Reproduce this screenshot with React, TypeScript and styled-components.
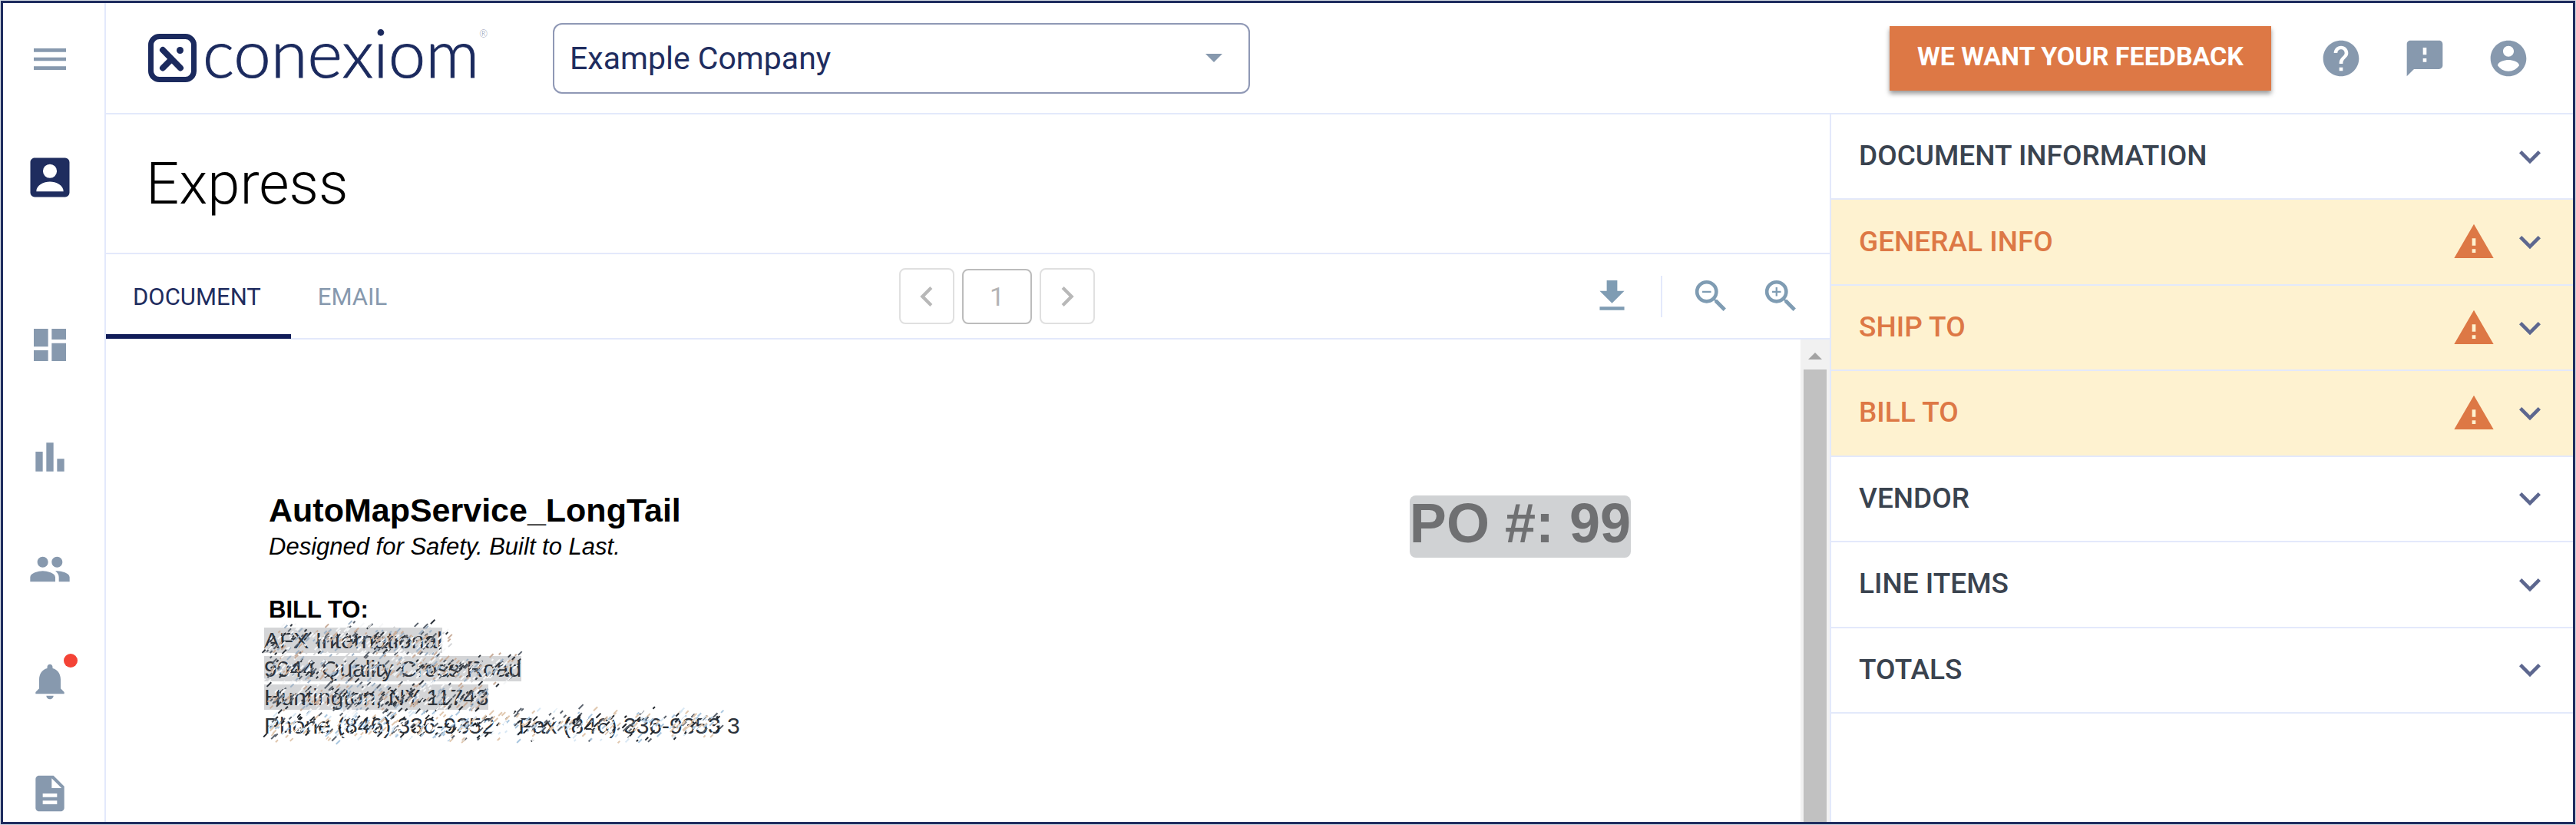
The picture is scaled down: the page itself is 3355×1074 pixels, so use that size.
import React, { useState } from "react";
import styled, { createGlobalStyle } from "styled-components";
import {
  MdBarChart,
  MdChevronLeft,
  MdChevronRight,
  MdDashboard,
  MdDescription,
  MdExpandMore,
  MdFeedback,
  MdGetApp,
  MdHelp,
  MdMenu,
  MdNotifications,
  MdPeople,
  MdWarning,
  MdZoomIn,
  MdZoomOut,
} from "react-icons/md";

const navy = "#1f2d5f";
const slate = "#8799ae";
const steel = "#7f9cb3";
const line = "#e3e9fb";
const orange = "#dd7845";

const GlobalStyle = createGlobalStyle`
  *, *::before, *::after { box-sizing: border-box; }
  body { margin: 0; background: #d3dae2; }
  button, input, select { font: inherit; color: inherit; }
  button { border: 0; background: none; padding: 0; cursor: pointer; }
  svg { display: block; flex: none; }
`;

const Frame = styled.div`
  display: flex;
  height: 100vh;
  border: 1px solid #d3dae2;
  font-family: Roboto, "Liberation Sans", sans-serif;
  background: #fff;
`;

const Shell = styled.div`
  flex: 1;
  min-width: 0;
  display: flex;
  border: 3px solid ${navy};
  overflow: hidden;
`;

const Sidebar = styled.nav`
  flex: none;
  width: 134px;
  padding-right: 10px;
  border-right: 2px solid ${line};
  display: flex;
  flex-direction: column;
  overflow: hidden;
`;

const NavButton = styled.button<{ $active?: boolean }>`
  flex: none;
  height: 146px;
  display: grid;
  place-items: center;
  color: ${(p) => (p.$active ? navy : slate)};
  font-size: ${(p) => (p.$active ? 68 : 56)}px;
  margin: ${(p) => (p.$active ? "8px 0 72px" : "0")};
`;

const BadgeHolder = styled.span`
  position: relative;
`;

const Badge = styled.span`
  position: absolute;
  top: -8px;
  right: -8px;
  width: 18px;
  height: 18px;
  border-radius: 50%;
  background: #f44336;
`;

const Main = styled.div`
  flex: 1;
  min-width: 0;
  display: flex;
  flex-direction: column;
`;

const Header = styled.header`
  flex: none;
  height: 145px;
  padding: 0 56px 0 55px;
  border-bottom: 2px solid ${line};
  display: flex;
  align-items: center;
`;

const Logo = styled.a`
  display: flex;
  align-items: center;
  gap: 8px;
  width: 447px;
  color: #1b2a5e;
  text-decoration: none;
`;

const Wordmark = styled.span`
  display: flex;
  font-family: Lato, "Liberation Sans", sans-serif;
  font-size: 87px;
  font-weight: 300;
  line-height: 96px;
  height: 112px;
  -webkit-text-stroke: 1px currentColor;
`;

const Registered = styled.sup`
  font-size: 13px;
  line-height: 48px;
  color: #8d95b0;
  -webkit-text-stroke: 0;
`;

const CompanyField = styled.label`
  display: grid;
  align-items: center;
  width: 908px;
  margin-left: 80px;
  color: ${navy};
  & > * {
    grid-area: 1 / 1;
  }
`;

const CompanySelect = styled.select`
  appearance: none;
  width: 100%;
  height: 92px;
  padding: 0 80px 0 20px;
  border: 2px solid #8f98b5;
  border-radius: 12px;
  background: #fff;
  font-size: 41px;
`;

const SelectArrow = styled.svg`
  justify-self: end;
  margin-right: 36px;
  pointer-events: none;
`;

const HeaderActions = styled.div`
  margin-left: auto;
  display: flex;
  align-items: center;
  gap: 53px;
  color: ${slate};
  font-size: 56px;
`;

const FeedbackButton = styled.button`
  height: 84px;
  padding: 0 36px 6px;
  margin-right: 10px;
  background: ${orange};
  color: #fff;
  font-size: 34px;
  font-weight: 700;
  box-shadow: 0 4px 6px rgba(0, 0, 0, 0.4);
`;

const Body = styled.div`
  flex: 1;
  min-height: 0;
  display: flex;
`;

const Workspace = styled.main`
  flex: 1;
  min-width: 0;
  display: flex;
  flex-direction: column;
`;

const Title = styled.h1`
  flex: none;
  margin: 0;
  height: 182px;
  padding: 0 52px;
  border-bottom: 2px solid ${line};
  font-size: 76px;
  font-weight: 300;
  line-height: 180px;
  color: #000;
`;

const Toolbar = styled.div`
  flex: none;
  height: 111px;
  border-bottom: 2px solid ${line};
  display: flex;
  justify-content: space-between;
`;

const Tabs = styled.div`
  display: flex;
  margin-bottom: -1px;
`;

const Tab = styled.button<{ $active?: boolean }>`
  padding: 6px 39px 0 35px;
  border-bottom: 6px solid ${(p) => (p.$active ? "#101c59" : "transparent")};
  color: ${(p) => (p.$active ? navy : slate)};
  font-size: 31px;
`;

const Pager = styled.div`
  display: flex;
  align-items: center;
  gap: 10px;
`;

const PageButton = styled.button`
  width: 72px;
  height: 73px;
  display: grid;
  place-items: center;
  border: 2px solid #e0e0e0;
  border-radius: 8px;
  color: #b8b8b8;
  font-size: 52px;
`;

const PageInput = styled.input`
  width: 91px;
  height: 72px;
  padding: 0;
  border: 2px solid #bcbcbc;
  border-radius: 8px;
  background: #fff;
  color: #b4b4b4;
  font-size: 34px;
  text-align: center;
`;

const Tools = styled.div`
  display: flex;
  align-items: center;
  padding-right: 18px;
  color: ${steel};
  font-size: 55px;
`;

const ToolButton = styled.button`
  padding: 18px;
`;

const Divider = styled.span`
  width: 2px;
  height: 54px;
  margin: 0 18px;
  background: ${line};
`;

const Viewer = styled.div`
  flex: 1;
  min-height: 0;
  display: flex;
`;

const Page = styled.article`
  flex: 1;
  min-width: 0;
  padding: 203px 221px 0 212px;
  display: flex;
  justify-content: space-between;
  align-items: flex-start;
  font-family: "Liberation Sans", Arial, sans-serif;
  font-size: 31px;
  line-height: 37px;
  color: #000;
`;

const Sender = styled.h2`
  margin: 0;
  padding-bottom: 10px;
  font-size: 43px;
  line-height: 38px;
`;

const Tagline = styled.p`
  margin: 0 0 45px;
  font-style: italic;
`;

const BillTo = styled.h3`
  margin: 0;
  font-size: 31px;
`;

const Address = styled.address`
  position: relative;
  margin: 3px 0 0 -6px;
  font-style: normal;
  font-size: 30px;
  color: #2c323a;
`;

const AddressLine = styled.div`
  display: flex;
  gap: 31px;
`;

const Mark = styled.span<{ $shaded?: boolean }>`
  background: ${(p) => (p.$shaded ? "#d4d5d7" : "transparent")};
  line-height: 33px;
  margin: 2px 0;
`;

const Scratches = styled.svg`
  position: absolute;
  left: -12px;
  top: -12px;
`;

const OrderNumber = styled.div`
  height: 81px;
  border-radius: 8px;
  background: #d0d2d4;
  color: #6f7072;
  font-size: 72px;
  font-weight: 700;
  line-height: 72px;
`;

const ScrollTrack = styled.div`
  flex: none;
  width: 38px;
  padding: 0 4px;
  background: #f1f1f1;
  display: flex;
  flex-direction: column;
`;

const ScrollUp = styled.button`
  height: 39px;
  display: grid;
  place-items: center;
  padding-top: 4px;
`;

const ScrollThumb = styled.div`
  flex: 1;
  background: #c1c1c1;
`;

const Panel = styled.aside`
  flex: none;
  width: 968px;
  border-left: 2px solid ${line};
`;

const Sections = styled.div`
  display: grid;
  grid-template-rows: repeat(7, 1fr);
  height: 780px;
`;

const Section = styled.button<{ $warn?: boolean }>`
  display: flex;
  align-items: center;
  gap: 17px;
  padding: 0 28px 0 36px;
  border-bottom: 2px solid ${line};
  background: ${(p) => (p.$warn ? "#fef2d0" : "#fff")};
  color: ${(p) => (p.$warn ? orange : "#3a434f")};
  font-size: 37px;
  font-weight: 500;
  text-align: left;
`;

const SectionName = styled.span`
  flex: 1;
  padding-bottom: 2px;
`;

const ChevronDown = styled(MdExpandMore)`
  color: #5d678f;
`;

const sections = [
  { name: "DOCUMENT INFORMATION" },
  { name: "GENERAL INFO", warn: true },
  { name: "SHIP TO", warn: true },
  { name: "BILL TO", warn: true },
  { name: "VENDOR" },
  { name: "LINE ITEMS" },
  { name: "TOTALS" },
];

const navItems = [
  { label: "Dashboard", icon: <MdDashboard /> },
  { label: "Reports", icon: <MdBarChart /> },
  { label: "People", icon: <MdPeople /> },
  {
    label: "Notifications",
    icon: (
      <BadgeHolder>
        <MdNotifications />
        <Badge />
      </BadgeHolder>
    ),
  },
  { label: "Documents", icon: <MdDescription /> },
];

const AccountBoxIcon = () => (
  <svg width="1em" height="1em" viewBox="0 0 24 24" fill="currentColor">
    <path
      fillRule="evenodd"
      d="M5 3h14a2 2 0 0 1 2 2v14a2 2 0 0 1-2 2H5a2 2 0 0 1-2-2V5c0-1.100.9-2 2-2zM12 5.900a3.200 3.200 0 1 0 0 6.400 3.200 3.200 0 0 0 0-6.400zM5.750 18.400h12.500c0-3-3.500-4.500-6.250-4.500s-6.250 1.500-6.250 4.500z"
    />
  </svg>
);

const AccountCircleIcon = () => (
  <svg width="1em" height="1em" viewBox="0 0 24 24" fill="currentColor">
    <path d="M12 2C6.480 2 2 6.480 2 12s4.480 10 10 10 10-4.480 10-10S17.520 2 12 2zm0 3c1.660 0 3 1.340 3 3s-1.340 3-3 3-3-1.340-3-3 1.340-3 3-3zm0 14.200c-2.500 0-4.710-1.280-6-3.220.03-1.990 4-3.080 6-3.080 1.990 0 5.970 1.090 6 3.080-1.290 1.940-3.500 3.220-6 3.220z" />
  </svg>
);

// Short diagonal strokes that obscure the address, seeded so they never move.
const shadedInks = ["#2f353d", "#59616c", "#9fb2c6", "#c9ad9a", "#f6f7f8", "#f6f7f8", "#d4d5d7"];
const plainInks = ["#20252c", "#59616c", "#a9c6df", "#e0c7ae", "#ffffff", "#ffffff", "#d9e8f4"];
const rowWidths = [262, 345, 306, 612];

function makeStrokes() {
  let seed = 7;
  const rnd = () => {
    seed = (seed * 16807) % 2147483647;
    return seed / 2147483647;
  };
  const strokes: { d: string; ink: string }[] = [];
  rowWidths.forEach((width, row) => {
    const inks = row < 3 ? shadedInks : plainInks;
    const count = Math.round(width * 1.1);
    for (let i = 0; i < count; i += 1) {
      const y = (rnd() + rnd()) * 24;
      const x = rnd() * (width - 22) + 18 - (y - 22) * 0.5;
      const len = 2 + rnd() * 4;
      strokes.push({
        d: `M${x.toFixed(1)} ${(row * 37 + y + 8).toFixed(1)}l${len.toFixed(1)} ${(-len).toFixed(1)}`,
        ink: inks[Math.floor(rnd() * inks.length)],
      });
    }
  });
  return strokes;
}

const strokes = makeStrokes();

export default function App() {
  const [page, setPage] = useState("1");
  return (
    <>
      <GlobalStyle />
      <Frame>
        <Shell>
          <Sidebar>
            <NavButton aria-label="Menu">
              <MdMenu />
            </NavButton>
            <NavButton $active aria-label="Account">
              <AccountBoxIcon />
            </NavButton>
            {navItems.map((item) => (
              <NavButton key={item.label} aria-label={item.label}>
                {item.icon}
              </NavButton>
            ))}
          </Sidebar>
          <Main>
            <Header>
              <Logo href="#">
                <svg width="63" height="63" viewBox="0 0 63 63" fill="none">
                  <rect x="3.5" y="3.5" width="56" height="56" rx="11" stroke="currentColor" strokeWidth="7" />
                  <path d="M19 21L42 44.500M19 44.500L29 34.500" stroke="currentColor" strokeWidth="8" strokeLinecap="round" />
                  <circle cx="41.500" cy="21.500" r="4.500" fill="currentColor" />
                </svg>
                <Wordmark>
                  conexiom<Registered>®</Registered>
                </Wordmark>
              </Logo>
              <CompanyField>
                <CompanySelect aria-label="Company" defaultValue="Example Company">
                  <option>Example Company</option>
                </CompanySelect>
                <SelectArrow width="22" height="11" viewBox="0 0 22 11">
                  <path d="M0 0h22L11 11z" fill={slate} />
                </SelectArrow>
              </CompanyField>
              <HeaderActions>
                <FeedbackButton>WE WANT YOUR FEEDBACK</FeedbackButton>
                <button aria-label="Help">
                  <MdHelp />
                </button>
                <button aria-label="Feedback">
                  <MdFeedback />
                </button>
                <button aria-label="Profile">
                  <AccountCircleIcon />
                </button>
              </HeaderActions>
            </Header>
            <Body>
              <Workspace>
                <Title>Express</Title>
                <Toolbar>
                  <Tabs role="tablist">
                    <Tab $active role="tab" aria-selected>
                      DOCUMENT
                    </Tab>
                    <Tab role="tab">EMAIL</Tab>
                  </Tabs>
                  <Pager>
                    <PageButton aria-label="Previous page">
                      <MdChevronLeft />
                    </PageButton>
                    <PageInput aria-label="Page" value={page} onChange={(e) => setPage(e.target.value)} />
                    <PageButton aria-label="Next page">
                      <MdChevronRight />
                    </PageButton>
                  </Pager>
                  <Tools>
                    <ToolButton aria-label="Download">
                      <MdGetApp />
                    </ToolButton>
                    <Divider />
                    <ToolButton aria-label="Zoom out">
                      <MdZoomOut />
                    </ToolButton>
                    <ToolButton aria-label="Zoom in">
                      <MdZoomIn />
                    </ToolButton>
                  </Tools>
                </Toolbar>
                <Viewer>
                  <Page>
                    <div>
                      <Sender>AutoMapService_LongTail</Sender>
                      <Tagline>Designed for Safety. Built to Last.</Tagline>
                      <BillTo>BILL TO:</BillTo>
                      <Address>
                        <AddressLine>
                          <Mark $shaded>AFX International</Mark>
                        </AddressLine>
                        <AddressLine>
                          <Mark $shaded>9044 Quality Cross Road</Mark>
                        </AddressLine>
                        <AddressLine>
                          <Mark $shaded>Huntington, NY 11743</Mark>
                        </AddressLine>
                        <AddressLine>
                          <Mark>Phone (846) 336-9352</Mark>
                          <Mark>Fax (846) 336-9353 3</Mark>
                        </AddressLine>
                        <Scratches width="640" height="176" fill="none" strokeWidth="2">
                          {strokes.map((s, i) => (
                            <path key={i} d={s.d} stroke={s.ink} />
                          ))}
                        </Scratches>
                      </Address>
                    </div>
                    <OrderNumber>PO #: 99</OrderNumber>
                  </Page>
                  <ScrollTrack>
                    <ScrollUp aria-label="Scroll up">
                      <svg width="18" height="9" viewBox="0 0 18 9">
                        <path d="M0 9h18L9 0z" fill="#a3a3a3" />
                      </svg>
                    </ScrollUp>
                    <ScrollThumb />
                  </ScrollTrack>
                </Viewer>
              </Workspace>
              <Panel>
                <Sections>
                  {sections.map((s) => (
                    <Section key={s.name} $warn={s.warn} aria-expanded={false}>
                      <SectionName>{s.name}</SectionName>
                      {s.warn && <MdWarning size={56} />}
                      <ChevronDown size={56} />
                    </Section>
                  ))}
                </Sections>
              </Panel>
            </Body>
          </Main>
        </Shell>
      </Frame>
    </>
  );
}
